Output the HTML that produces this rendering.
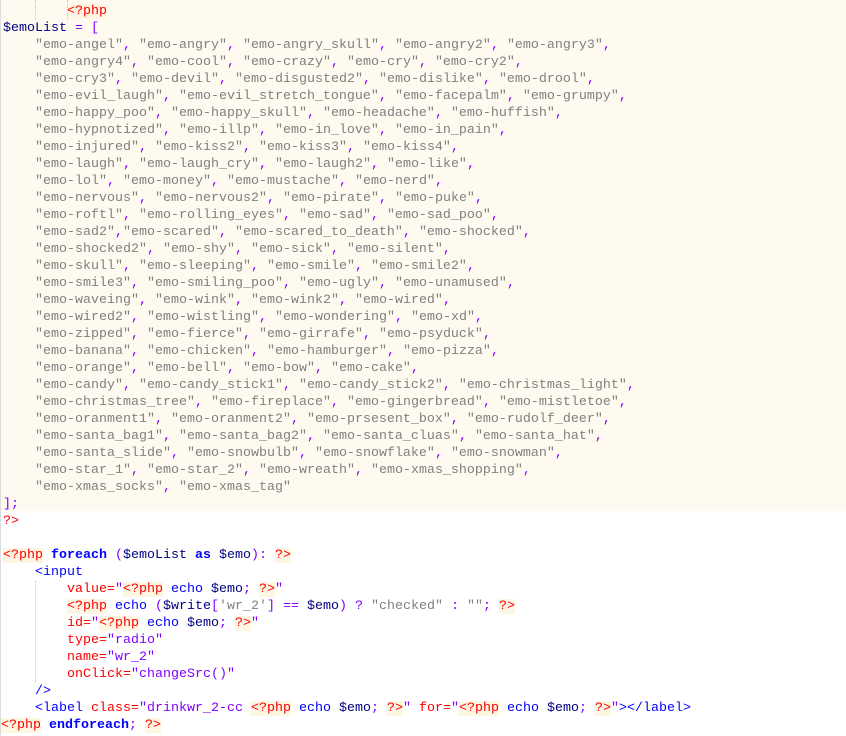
<!DOCTYPE html>
<html><head><meta charset="utf-8"><style>
body{margin:0;background:#fff;width:846px;height:736px;overflow:hidden;position:relative}
.code{position:absolute;left:0;top:0;width:846px;font-family:"Liberation Mono",monospace;font-size:13.33px;}
.l{height:17px;line-height:17px;white-space:pre;padding-left:3px;position:relative}
.bg{background:#fefaf0;padding-top:3px}
.s{color:#808080}.p{color:#8000ff}.v{color:#000080}.k{color:#0000ff;font-weight:bold}
.t{color:#ff0000;background:#fdf6e3}.tb{color:#ff0000}
.h{color:#0000ff}.a{color:#ff0000}.q{color:#8000ff}
.gutter{position:absolute;left:0;top:0;width:1px;height:736px;background:#ddd}
.g1{position:absolute;left:35px;width:0;border-left:1px dotted #c8c8c8}
.g2{position:absolute;left:67px;width:0;border-left:1px dotted #c8c8c8}
</style></head><body>
<div class="code">
<div class="bg">
<div class="l">        <span class="t">&lt;?php</span></div>
<div class="l"><span class="v">$emoList</span> <span class="p">= [</span></div>
<div class="l"><span class="s">    "emo-angel"</span><span class="p">,</span> <span class="s">"emo-angry"</span><span class="p">,</span> <span class="s">"emo-angry_skull"</span><span class="p">,</span> <span class="s">"emo-angry2"</span><span class="p">,</span> <span class="s">"emo-angry3"</span><span class="p">,</span></div>
<div class="l"><span class="s">    "emo-angry4"</span><span class="p">,</span> <span class="s">"emo-cool"</span><span class="p">,</span> <span class="s">"emo-crazy"</span><span class="p">,</span> <span class="s">"emo-cry"</span><span class="p">,</span> <span class="s">"emo-cry2"</span><span class="p">,</span></div>
<div class="l"><span class="s">    "emo-cry3"</span><span class="p">,</span> <span class="s">"emo-devil"</span><span class="p">,</span> <span class="s">"emo-disgusted2"</span><span class="p">,</span> <span class="s">"emo-dislike"</span><span class="p">,</span> <span class="s">"emo-drool"</span><span class="p">,</span></div>
<div class="l"><span class="s">    "emo-evil_laugh"</span><span class="p">,</span> <span class="s">"emo-evil_stretch_tongue"</span><span class="p">,</span> <span class="s">"emo-facepalm"</span><span class="p">,</span> <span class="s">"emo-grumpy"</span><span class="p">,</span></div>
<div class="l"><span class="s">    "emo-happy_poo"</span><span class="p">,</span> <span class="s">"emo-happy_skull"</span><span class="p">,</span> <span class="s">"emo-headache"</span><span class="p">,</span> <span class="s">"emo-huffish"</span><span class="p">,</span></div>
<div class="l"><span class="s">    "emo-hypnotized"</span><span class="p">,</span> <span class="s">"emo-illp"</span><span class="p">,</span> <span class="s">"emo-in_love"</span><span class="p">,</span> <span class="s">"emo-in_pain"</span><span class="p">,</span></div>
<div class="l"><span class="s">    "emo-injured"</span><span class="p">,</span> <span class="s">"emo-kiss2"</span><span class="p">,</span> <span class="s">"emo-kiss3"</span><span class="p">,</span> <span class="s">"emo-kiss4"</span><span class="p">,</span></div>
<div class="l"><span class="s">    "emo-laugh"</span><span class="p">,</span> <span class="s">"emo-laugh_cry"</span><span class="p">,</span> <span class="s">"emo-laugh2"</span><span class="p">,</span> <span class="s">"emo-like"</span><span class="p">,</span></div>
<div class="l"><span class="s">    "emo-lol"</span><span class="p">,</span> <span class="s">"emo-money"</span><span class="p">,</span> <span class="s">"emo-mustache"</span><span class="p">,</span> <span class="s">"emo-nerd"</span><span class="p">,</span></div>
<div class="l"><span class="s">    "emo-nervous"</span><span class="p">,</span> <span class="s">"emo-nervous2"</span><span class="p">,</span> <span class="s">"emo-pirate"</span><span class="p">,</span> <span class="s">"emo-puke"</span><span class="p">,</span></div>
<div class="l"><span class="s">    "emo-roftl"</span><span class="p">,</span> <span class="s">"emo-rolling_eyes"</span><span class="p">,</span> <span class="s">"emo-sad"</span><span class="p">,</span> <span class="s">"emo-sad_poo"</span><span class="p">,</span></div>
<div class="l"><span class="s">    "emo-sad2"</span><span class="p">,</span><span class="s">"emo-scared"</span><span class="p">,</span> <span class="s">"emo-scared_to_death"</span><span class="p">,</span> <span class="s">"emo-shocked"</span><span class="p">,</span></div>
<div class="l"><span class="s">    "emo-shocked2"</span><span class="p">,</span> <span class="s">"emo-shy"</span><span class="p">,</span> <span class="s">"emo-sick"</span><span class="p">,</span> <span class="s">"emo-silent"</span><span class="p">,</span></div>
<div class="l"><span class="s">    "emo-skull"</span><span class="p">,</span> <span class="s">"emo-sleeping"</span><span class="p">,</span> <span class="s">"emo-smile"</span><span class="p">,</span> <span class="s">"emo-smile2"</span><span class="p">,</span></div>
<div class="l"><span class="s">    "emo-smile3"</span><span class="p">,</span> <span class="s">"emo-smiling_poo"</span><span class="p">,</span> <span class="s">"emo-ugly"</span><span class="p">,</span> <span class="s">"emo-unamused"</span><span class="p">,</span></div>
<div class="l"><span class="s">    "emo-waveing"</span><span class="p">,</span> <span class="s">"emo-wink"</span><span class="p">,</span> <span class="s">"emo-wink2"</span><span class="p">,</span> <span class="s">"emo-wired"</span><span class="p">,</span></div>
<div class="l"><span class="s">    "emo-wired2"</span><span class="p">,</span> <span class="s">"emo-wistling"</span><span class="p">,</span> <span class="s">"emo-wondering"</span><span class="p">,</span> <span class="s">"emo-xd"</span><span class="p">,</span></div>
<div class="l"><span class="s">    "emo-zipped"</span><span class="p">,</span> <span class="s">"emo-fierce"</span><span class="p">,</span> <span class="s">"emo-girrafe"</span><span class="p">,</span> <span class="s">"emo-psyduck"</span><span class="p">,</span></div>
<div class="l"><span class="s">    "emo-banana"</span><span class="p">,</span> <span class="s">"emo-chicken"</span><span class="p">,</span> <span class="s">"emo-hamburger"</span><span class="p">,</span> <span class="s">"emo-pizza"</span><span class="p">,</span></div>
<div class="l"><span class="s">    "emo-orange"</span><span class="p">,</span> <span class="s">"emo-bell"</span><span class="p">,</span> <span class="s">"emo-bow"</span><span class="p">,</span> <span class="s">"emo-cake"</span><span class="p">,</span></div>
<div class="l"><span class="s">    "emo-candy"</span><span class="p">,</span> <span class="s">"emo-candy_stick1"</span><span class="p">,</span> <span class="s">"emo-candy_stick2"</span><span class="p">,</span> <span class="s">"emo-christmas_light"</span><span class="p">,</span></div>
<div class="l"><span class="s">    "emo-christmas_tree"</span><span class="p">,</span> <span class="s">"emo-fireplace"</span><span class="p">,</span> <span class="s">"emo-gingerbread"</span><span class="p">,</span> <span class="s">"emo-mistletoe"</span><span class="p">,</span></div>
<div class="l"><span class="s">    "emo-oranment1"</span><span class="p">,</span> <span class="s">"emo-oranment2"</span><span class="p">,</span> <span class="s">"emo-prsesent_box"</span><span class="p">,</span> <span class="s">"emo-rudolf_deer"</span><span class="p">,</span></div>
<div class="l"><span class="s">    "emo-santa_bag1"</span><span class="p">,</span> <span class="s">"emo-santa_bag2"</span><span class="p">,</span> <span class="s">"emo-santa_cluas"</span><span class="p">,</span> <span class="s">"emo-santa_hat"</span><span class="p">,</span></div>
<div class="l"><span class="s">    "emo-santa_slide"</span><span class="p">,</span> <span class="s">"emo-snowbulb"</span><span class="p">,</span> <span class="s">"emo-snowflake"</span><span class="p">,</span> <span class="s">"emo-snowman"</span><span class="p">,</span></div>
<div class="l"><span class="s">    "emo-star_1"</span><span class="p">,</span> <span class="s">"emo-star_2"</span><span class="p">,</span> <span class="s">"emo-wreath"</span><span class="p">,</span> <span class="s">"emo-xmas_shopping"</span><span class="p">,</span></div>
<div class="l"><span class="s">    "emo-xmas_socks"</span><span class="p">,</span> <span class="s">"emo-xmas_tag"</span></div>
<div class="l" style="height:15px"><span class="p">];</span></div>
</div>
<div class="l" style="margin-top:2px"><span class="tb">?&gt;</span></div>
<div class="l"> </div>
<div class="l"><span class="t">&lt;?php</span> <span class="k">foreach</span> <span class="p">(</span><span class="v">$emoList</span> <span class="k">as</span> <span class="v">$emo</span><span class="p">):</span> <span class="t">?&gt;</span></div>
<div class="l">    <span class="h">&lt;input</span></div>
<div class="l">        <span class="a">value=</span><span class="q">"</span><span class="t">&lt;?php</span> <span class="h">echo</span> <span class="v">$emo</span><span class="p">;</span> <span class="t">?&gt;</span><span class="q">"</span></div>
<div class="l">        <span class="t">&lt;?php</span> <span class="h">echo</span> <span class="p">(</span><span class="v">$write</span><span class="p">[</span><span class="s">'wr_2'</span><span class="p">] ==</span> <span class="v">$emo</span><span class="p">) ?</span> <span class="s">"checked"</span> <span class="p">:</span> <span class="s">""</span><span class="p">;</span> <span class="t">?&gt;</span></div>
<div class="l">        <span class="a">id=</span><span class="q">"</span><span class="t">&lt;?php</span> <span class="h">echo</span> <span class="v">$emo</span><span class="p">;</span> <span class="t">?&gt;</span><span class="q">"</span></div>
<div class="l">        <span class="a">type=</span><span class="q">"radio"</span></div>
<div class="l">        <span class="a">name=</span><span class="q">"wr_2"</span></div>
<div class="l">        <span class="a">onClick=</span><span class="q">"changeSrc()"</span></div>
<div class="l">    <span class="h">/&gt;</span></div>
<div class="l">    <span class="h">&lt;label</span> <span class="a">class=</span><span class="q">"drinkwr_2-cc </span><span class="t">&lt;?php</span> <span class="h">echo</span> <span class="v">$emo</span><span class="p">;</span> <span class="t">?&gt;</span><span class="q">"</span> <span class="a">for=</span><span class="q">"</span><span class="t">&lt;?php</span> <span class="h">echo</span> <span class="v">$emo</span><span class="p">;</span> <span class="t">?&gt;</span><span class="q">"</span><span class="h">&gt;&lt;/label&gt;</span></div>
<div class="l" style="padding-left:1px"><span class="t">&lt;?php</span> <span class="k">endforeach</span><span class="p">;</span> <span class="t">?&gt;</span></div>
</div>
<div class="gutter"></div>
<div class="g1" style="top:0;height:20px"></div>
<div class="g1" style="top:581px;height:102px"></div>
<div class="g2" style="top:0;height:20px"></div>
</body></html>
